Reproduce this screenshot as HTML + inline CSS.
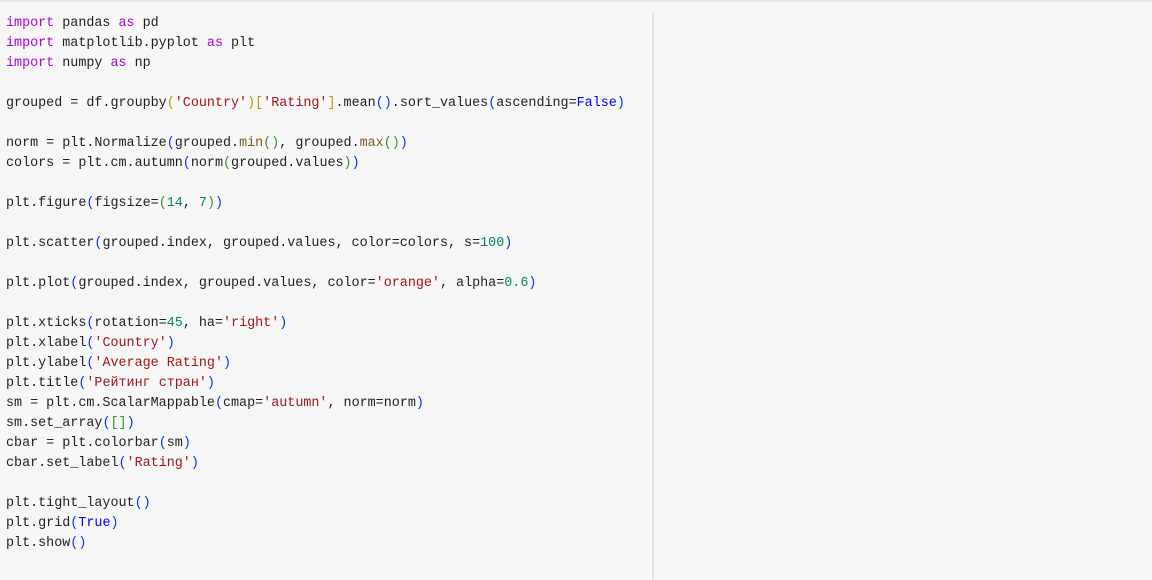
<!DOCTYPE html>
<html><head><meta charset="utf-8"><style>
html,body{margin:0;padding:0;}
body{width:1152px;height:580px;background:#f7f7f7;position:relative;overflow:hidden;}
.top{position:absolute;left:0;top:0;width:1152px;height:2px;background:#e6e6e6;}
.vl{position:absolute;left:652px;top:13px;width:2px;height:567px;background:#e3e3e3;}
pre{position:absolute;left:6px;top:14px;margin:0;font-family:"Liberation Mono","DejaVu Sans Mono",monospace;font-size:13.4px;line-height:20px;color:#1f1f1f;}
.k{color:#af00db}.s{color:#a31515}.n{color:#098658}.b{color:#0431fa}.g{color:#319331}.y{color:#b59a00}.f{color:#795e26}.c{color:#0000ff}
</style></head><body>
<div class="top"></div><div class="vl"></div>
<pre><span class="k">import</span> pandas <span class="k">as</span> pd
<span class="k">import</span> matplotlib.pyplot <span class="k">as</span> plt
<span class="k">import</span> numpy <span class="k">as</span> np

grouped = df.groupby<span class="y">(</span><span class="s">'Country'</span><span class="y">)[</span><span class="s">'Rating'</span><span class="y">]</span>.mean<span class="b">()</span>.sort_values<span class="b">(</span>ascending=<span class="c">False</span><span class="b">)</span>

norm = plt.Normalize<span class="b">(</span>grouped.<span class="f">min</span><span class="g">()</span>, grouped.<span class="f">max</span><span class="g">()</span><span class="b">)</span>
colors = plt.cm.autumn<span class="b">(</span>norm<span class="g">(</span>grouped.values<span class="g">)</span><span class="b">)</span>

plt.figure<span class="b">(</span>figsize=<span class="g">(</span><span class="n">14</span>, <span class="n">7</span><span class="g">)</span><span class="b">)</span>

plt.scatter<span class="b">(</span>grouped.index, grouped.values, color=colors, s=<span class="n">100</span><span class="b">)</span>

plt.plot<span class="b">(</span>grouped.index, grouped.values, color=<span class="s">'orange'</span>, alpha=<span class="n">0.6</span><span class="b">)</span>

plt.xticks<span class="b">(</span>rotation=<span class="n">45</span>, ha=<span class="s">'right'</span><span class="b">)</span>
plt.xlabel<span class="b">(</span><span class="s">'Country'</span><span class="b">)</span>
plt.ylabel<span class="b">(</span><span class="s">'Average Rating'</span><span class="b">)</span>
plt.title<span class="b">(</span><span class="s">'Рейтинг стран'</span><span class="b">)</span>
sm = plt.cm.ScalarMappable<span class="b">(</span>cmap=<span class="s">'autumn'</span>, norm=norm<span class="b">)</span>
sm.set_array<span class="b">(</span><span class="g">[]</span><span class="b">)</span>
cbar = plt.colorbar<span class="b">(</span>sm<span class="b">)</span>
cbar.set_label<span class="b">(</span><span class="s">'Rating'</span><span class="b">)</span>

plt.tight_layout<span class="b">()</span>
plt.grid<span class="b">(</span><span class="c">True</span><span class="b">)</span>
plt.show<span class="b">()</span></pre>
</body></html>
